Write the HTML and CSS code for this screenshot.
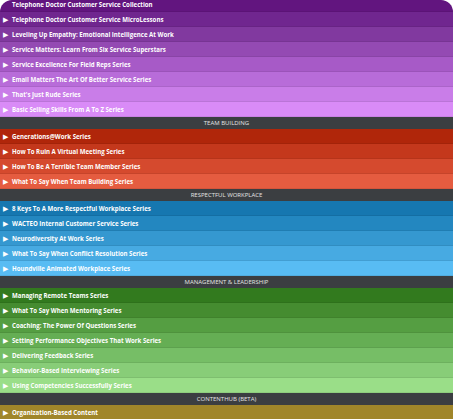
FILE: index.html
```html
<!DOCTYPE html>
<html lang="en">
<head>
    <meta charset="UTF-8">
    <title>Series Menu</title>
    <link rel="stylesheet" href="styles.css">
</head>
<body>
    <div class="menu">
        <ul class="series-list">
            <li class="item p1"><span class="arrow"></span>Telephone Doctor Customer Service Collection</li>
            <li class="item p2"><span class="arrow">&#9654;</span>Telephone Doctor Customer Service MicroLessons</li>
            <li class="item p3"><span class="arrow">&#9654;</span>Leveling Up Empathy: Emotional Intelligence At Work</li>
            <li class="item p4"><span class="arrow">&#9654;</span>Service Matters: Learn From Six Service Superstars</li>
            <li class="item p5"><span class="arrow">&#9654;</span>Service Excellence For Field Reps Series</li>
            <li class="item p6"><span class="arrow">&#9654;</span>Email Matters The Art Of Better Service Series</li>
            <li class="item p7"><span class="arrow">&#9654;</span>That's Just Rude Series</li>
            <li class="item p8"><span class="arrow">&#9654;</span>Basic Selling Skills From A To Z Series</li>

            <li class="section">TEAM BUILDING</li>
            <li class="item r1"><span class="arrow">&#9654;</span>Generations@Work Series</li>
            <li class="item r2"><span class="arrow">&#9654;</span>How To Ruin A Virtual Meeting Series</li>
            <li class="item r3"><span class="arrow">&#9654;</span>How To Be A Terrible Team Member Series</li>
            <li class="item r4"><span class="arrow">&#9654;</span>What To Say When Team Building Series</li>

            <li class="section">RESPECTFUL WORKPLACE</li>
            <li class="item b1"><span class="arrow">&#9654;</span>8 Keys To A More Respectful Workplace Series</li>
            <li class="item b2"><span class="arrow">&#9654;</span>WACTEO Internal Customer Service Series</li>
            <li class="item b3"><span class="arrow">&#9654;</span>Neurodiversity At Work Series</li>
            <li class="item b4"><span class="arrow">&#9654;</span>What To Say When Conflict Resolution Series</li>
            <li class="item b5"><span class="arrow">&#9654;</span>Houndville Animated Workplace Series</li>

            <li class="section">MANAGEMENT &amp; LEADERSHIP</li>
            <li class="item g1"><span class="arrow">&#9654;</span>Managing Remote Teams Series</li>
            <li class="item g2"><span class="arrow">&#9654;</span>What To Say When Mentoring Series</li>
            <li class="item g3"><span class="arrow">&#9654;</span>Coaching: The Power Of Questions Series</li>
            <li class="item g4"><span class="arrow">&#9654;</span>Setting Performance Objectives That Work Series</li>
            <li class="item g5"><span class="arrow">&#9654;</span>Delivering Feedback Series</li>
            <li class="item g6"><span class="arrow">&#9654;</span>Behavior-Based Interviewing Series</li>
            <li class="item g7"><span class="arrow">&#9654;</span>Using Competencies Successfully Series</li>

            <li class="section">CONTENTHUB (BETA)</li>
            <li class="item y1"><span class="arrow">&#9654;</span>Organization-Based Content</li>
        </ul>
    </div>
</body>
</html>
```

FILE: styles.css
```css
body {
    margin: 0;
    padding: 0;
    background: #fff;
    font-family: "Open Sans", "DejaVu Sans", sans-serif;
}
.menu {
    width: 453px;
    height: 419px;
    overflow: hidden;
    border-radius: 12px 12px 0 0;
}
.series-list {
    list-style: none;
    margin: -3px 0 0 0;
    padding: 0;
}
.item {
    display: flex;
    align-items: center;
    height: 14px;
    border-bottom: 1px solid rgba(0, 0, 0, 0.07);
    color: #fff;
    font-size: 6.1px;
    font-weight: 700;
    white-space: nowrap;
}
.arrow {
    flex: none;
    width: 12px;
    padding-left: 3px;
    box-sizing: border-box;
    font-size: 7px;
}
.section {
    height: 12px;
    line-height: 12px;
    background-color: #3b3e41;
    color: #e4e4e4;
    font-size: 6px;
    text-align: center;
}

/* purple */
.p1 { background-color: #62157f; }
.p2 { background-color: #70268f; }
.p3 { background-color: #81399f; }
.p4 { background-color: #944ab3; }
.p5 { background-color: #a75ac7; }
.p6 { background-color: #b86cd9; }
.p7 { background-color: #c97de8; }
.p8 { background-color: #d98bf7; }

/* red */
.r1 { background-color: #b0260a; }
.r2 { background-color: #c4381c; }
.r3 { background-color: #d54a2e; }
.r4 { background-color: #e55c40; }

/* blue */
.b1 { background-color: #1677b0; }
.b2 { background-color: #2387c0; }
.b3 { background-color: #3598d0; }
.b4 { background-color: #47aae2; }
.b5 { background-color: #58bcf3; }

/* green */
.g1 { background-color: #327a1e; }
.g2 { background-color: #458c30; }
.g3 { background-color: #559e42; }
.g4 { background-color: #65ae54; }
.g5 { background-color: #76be66; }
.g6 { background-color: #88cd78; }
.g7 { background-color: #9ade88; }

/* gold */
.y1 { background-color: #a0862a; }
```
